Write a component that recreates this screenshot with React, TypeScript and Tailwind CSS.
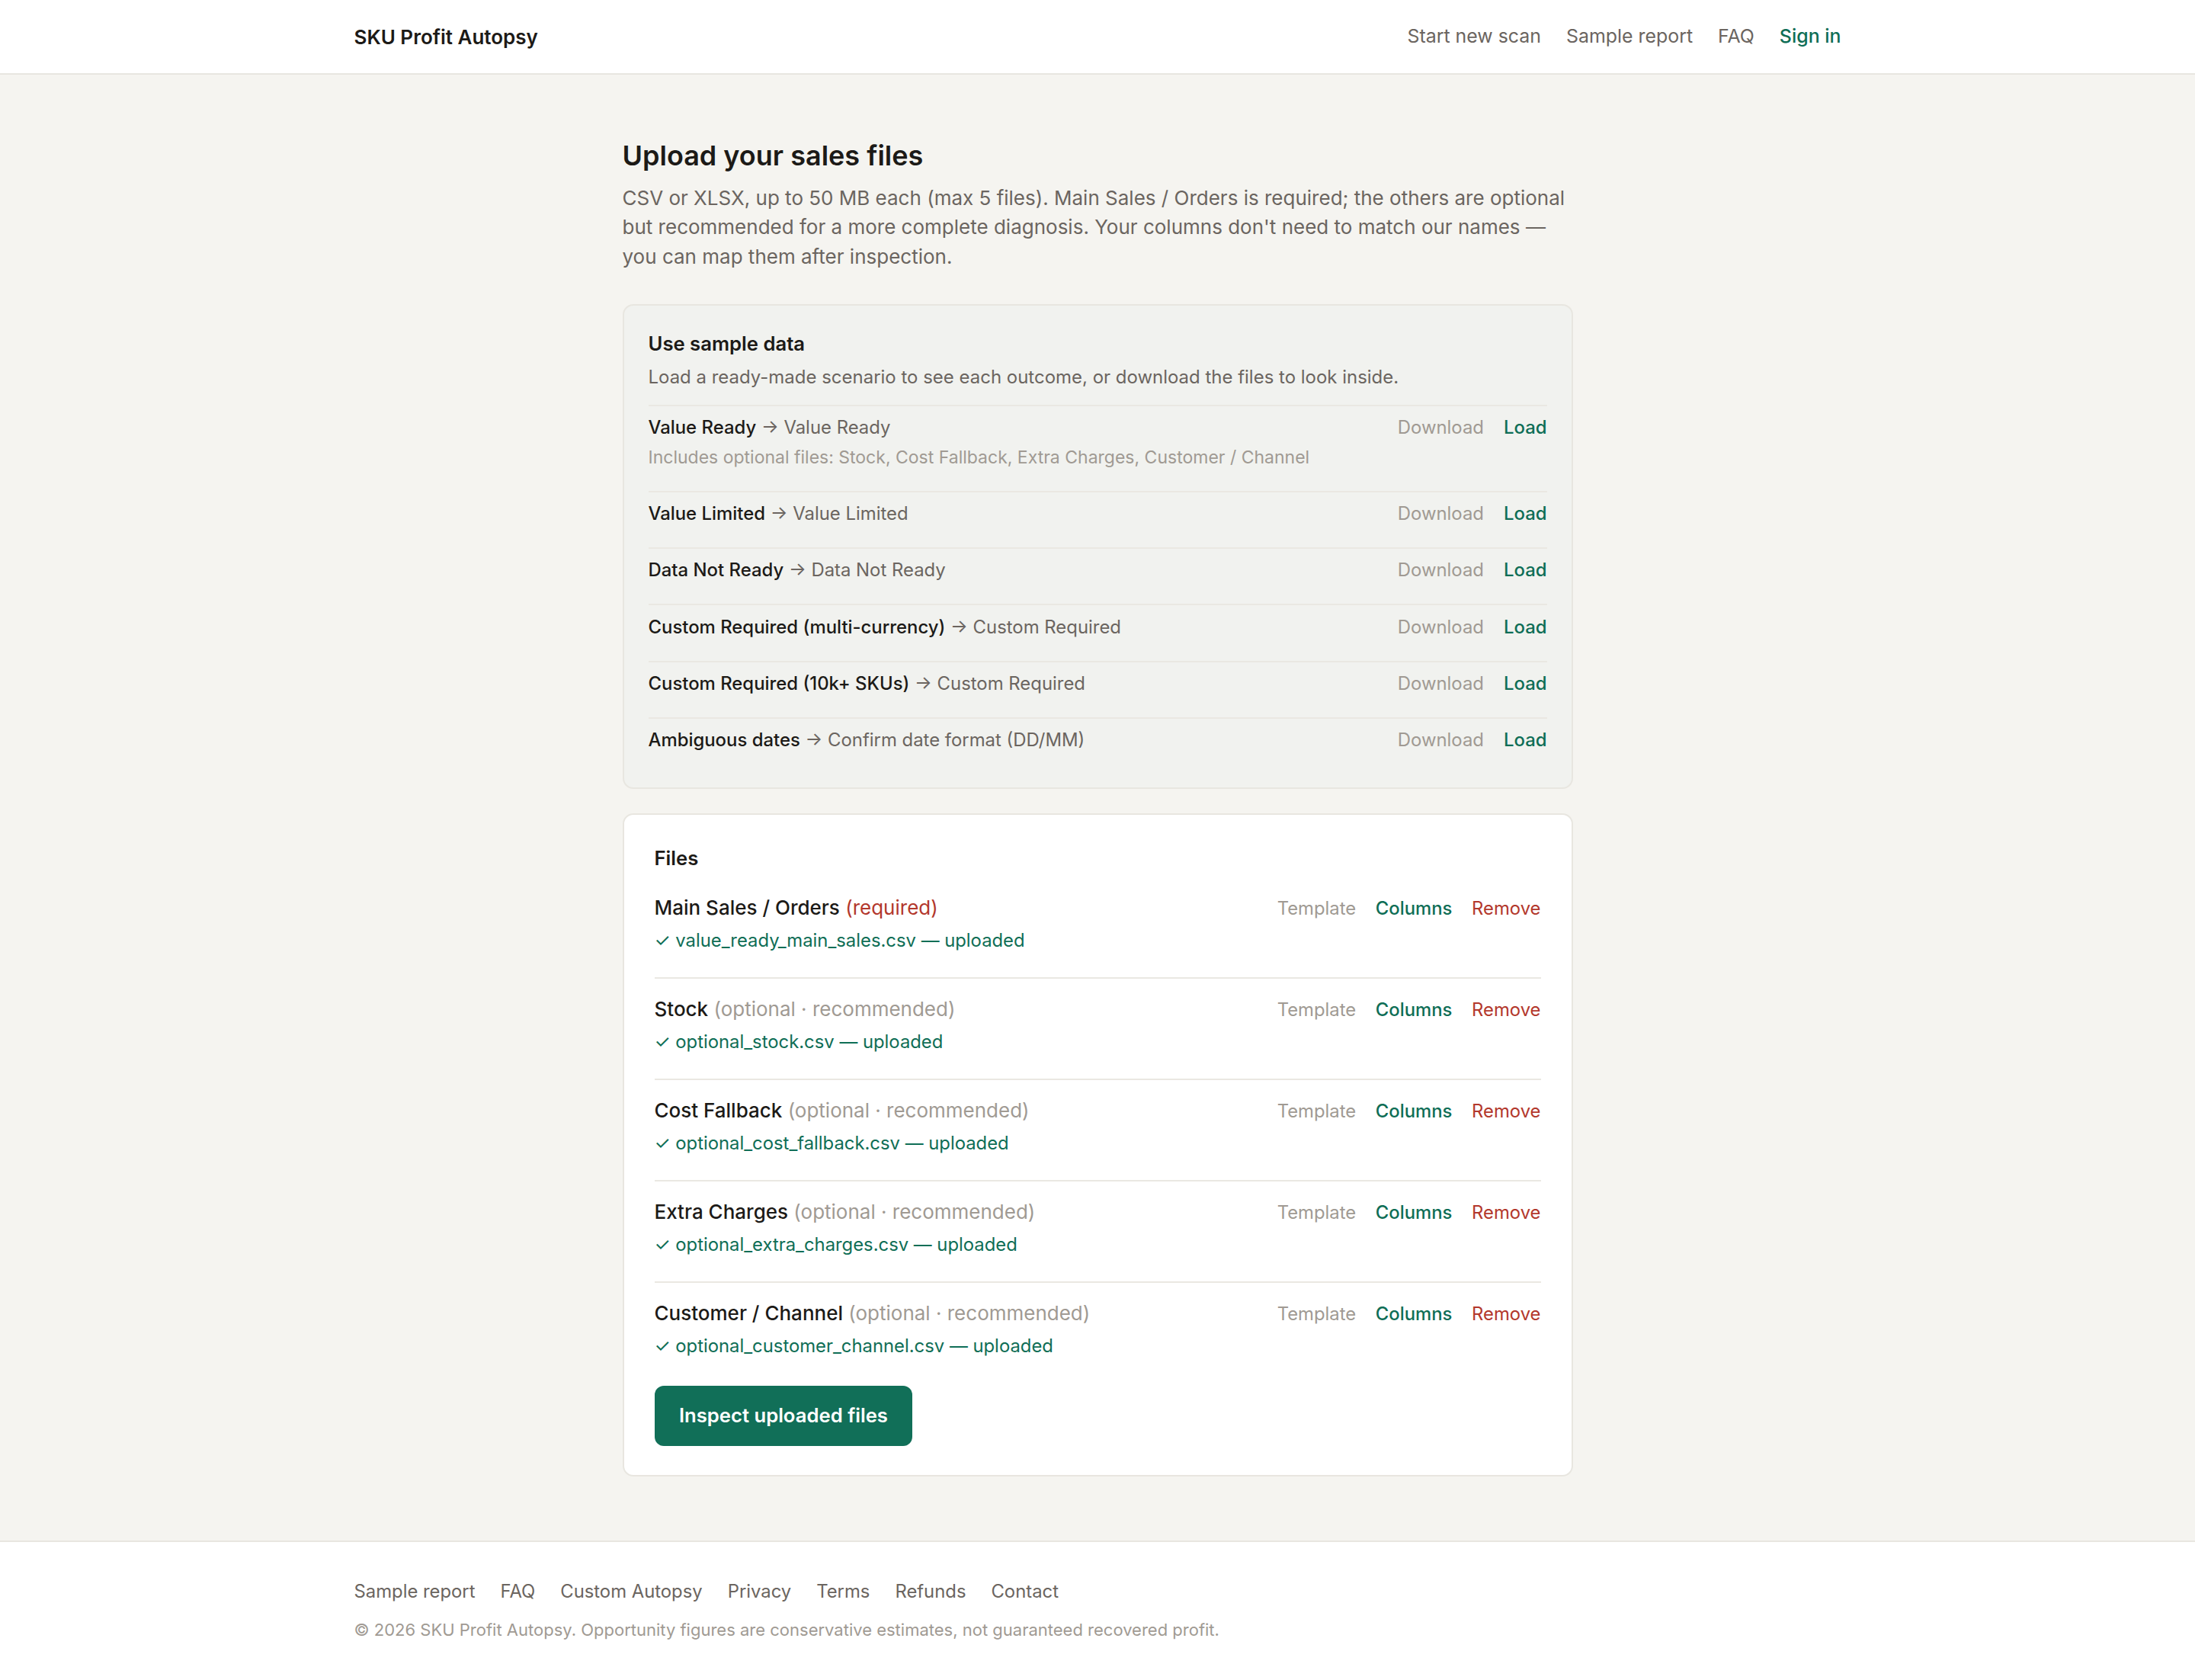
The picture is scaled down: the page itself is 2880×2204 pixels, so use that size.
const samples = [
  { name: "Value Ready", outcome: "Value Ready", note: "Includes optional files: Stock, Cost Fallback, Extra Charges, Customer / Channel" },
  { name: "Value Limited", outcome: "Value Limited" },
  { name: "Data Not Ready", outcome: "Data Not Ready" },
  { name: "Custom Required (multi-currency)", outcome: "Custom Required" },
  { name: "Custom Required (10k+ SKUs)", outcome: "Custom Required" },
  { name: "Ambiguous dates", outcome: "Confirm date format (DD/MM)" },
];

const files = [
  { label: "Main Sales / Orders", required: true, file: "value_ready_main_sales.csv" },
  { label: "Stock", required: false, file: "optional_stock.csv" },
  { label: "Cost Fallback", required: false, file: "optional_cost_fallback.csv" },
  { label: "Extra Charges", required: false, file: "optional_extra_charges.csv" },
  { label: "Customer / Channel", required: false, file: "optional_customer_channel.csv" },
];

function SampleRow({ name, outcome, note }: { name: string; outcome: string; note?: string }) {
  return (
    <div className="flex items-start justify-between border-t-2 border-[#eae8e2] py-[10.5px]">
      <div>
        <div className="text-[23.9px] leading-[35.75px]">
          <span className="font-medium text-[#1c1a17]">{name}</span>
          <span className="text-[#6b6560]"> → {outcome}</span>
        </div>
        {note && (
          <div className="mt-[4px] text-[23px] leading-[34.5px] text-[#a09a93]">{note}</div>
        )}
      </div>
      <div className="flex gap-[26px] text-[23.9px] leading-[35.75px]">
        <a className="cursor-pointer text-[#a09a93]">Download</a>
        <a className="cursor-pointer font-medium text-[#0f6e56]">Load</a>
      </div>
    </div>
  );
}

function FileRow({ label, required, file, first }: { label: string; required: boolean; file: string; first: boolean }) {
  return (
    <div
      className={
        first
          ? "flex items-baseline justify-between py-[20px]"
          : "flex items-baseline justify-between border-t-2 border-[#eae8e2] py-[20px]"
      }
    >
      <div>
        <div className="text-[26px] leading-[39px]">
          <span className="font-medium text-[#1c1a17]">{label}</span>{" "}
          {required ? (
            <span className="text-[#b3382c]">(required)</span>
          ) : (
            <span className="text-[#a09a93]">(optional · recommended)</span>
          )}
        </div>
        <div className="mt-[6px] text-[23.83px] leading-[35.75px] text-[#0f6e56]">
          ✓ {file} — uploaded
        </div>
      </div>
      <div className="flex gap-[25.7px] text-[23.83px] leading-[35.75px]">
        <a className="cursor-pointer text-[#a09a93]">Template</a>
        <a className="cursor-pointer font-medium text-[#0f6e56]">Columns</a>
        <a className="cursor-pointer text-[#b3382c]">Remove</a>
      </div>
    </div>
  );
}

export default function App() {
  return (
    <div className="flex min-h-screen flex-col bg-[#f5f4f0] text-[#1c1a17] [font-family:Inter,'Liberation_Sans',sans-serif]">
      <header className="border-b-2 border-[#e8e6e0] bg-white">
        <div className="mx-auto flex h-[96px] max-w-[2017px] items-center justify-between px-[33px]">
          <span className="text-[26px] font-semibold">SKU Profit Autopsy</span>
          <nav className="flex items-center gap-[33px] text-[24.9px] text-[#6b6560]">
            <a className="cursor-pointer">Start new scan</a>
            <a className="cursor-pointer">Sample report</a>
            <a className="cursor-pointer">FAQ</a>
            <a className="cursor-pointer font-medium text-[#0f6e56]">Sign in</a>
          </nav>
        </div>
      </header>

      <main className="flex-1 pt-[84.4px] pb-[82px]">
        <div className="mx-auto w-[1247px]">
          <h1 className="text-[36px] font-semibold leading-[45px]">Upload your sales files</h1>
          <p className="mt-[13.5px] text-[26px] leading-[38.5px] text-[#6b6560]">
            CSV or XLSX, up to 50 MB each (max 5 files). Main Sales / Orders is required; the others are optional
            but recommended for a more complete diagnosis. Your columns don't need to match our names — you can map
            them after inspection.
          </p>

          <section className="mt-[42.5px] rounded-[14px] border-2 border-[#e8e6e0] bg-[#f1f2ef] px-[32px] pt-[31.5px] pb-[33px]">
            <h2 className="text-[25.67px] font-semibold leading-[38.5px]">Use sample data</h2>
            <p className="mt-[6.6px] text-[23.97px] leading-[35.75px] text-[#6b6560]">
              Load a ready-made scenario to see each outcome, or download the files to look inside.
            </p>
            <div className="mt-[17.5px] flex flex-col gap-[15.6px]">
              {samples.map((s) => (
                <SampleRow key={s.name} {...s} />
              ))}
            </div>
          </section>

          <section className="mt-[32px] rounded-[14px] border-2 border-[#e8e6e0] bg-white px-[40px] pt-[38.4px] pb-[38.5px]">
            <h2 className="text-[25.67px] font-semibold leading-[38.5px]">Files</h2>
            <div className="mt-[5.85px] flex flex-col gap-[10.25px]">
              {files.map((f, i) => (
                <FileRow key={f.label} {...f} first={i === 0} />
              ))}
            </div>
            <button className="mt-[13.8px] h-[79px] rounded-[12px] bg-[#116f58] px-[32.4px] text-[25.67px] font-semibold text-white">
              Inspect uploaded files
            </button>
          </section>
        </div>
      </main>

      <footer className="border-t-2 border-[#e8e6e0] bg-white">
        <div className="mx-auto max-w-[2017px] px-[33px] pt-[47px] pb-[49.5px]">
          <nav className="flex gap-[33px] text-[23.83px] leading-[35.75px] text-[#6b6560]">
            <a className="cursor-pointer">Sample report</a>
            <a className="cursor-pointer">FAQ</a>
            <a className="cursor-pointer">Custom Autopsy</a>
            <a className="cursor-pointer">Privacy</a>
            <a className="cursor-pointer">Terms</a>
            <a className="cursor-pointer">Refunds</a>
            <a className="cursor-pointer">Contact</a>
          </nav>
          <p className="mt-[16.25px] text-[22px] leading-[33px] text-[#a09a93]">
            © 2026 SKU Profit Autopsy. Opportunity figures are conservative estimates, not guaranteed recovered profit.
          </p>
        </div>
      </footer>
    </div>
  );
}
